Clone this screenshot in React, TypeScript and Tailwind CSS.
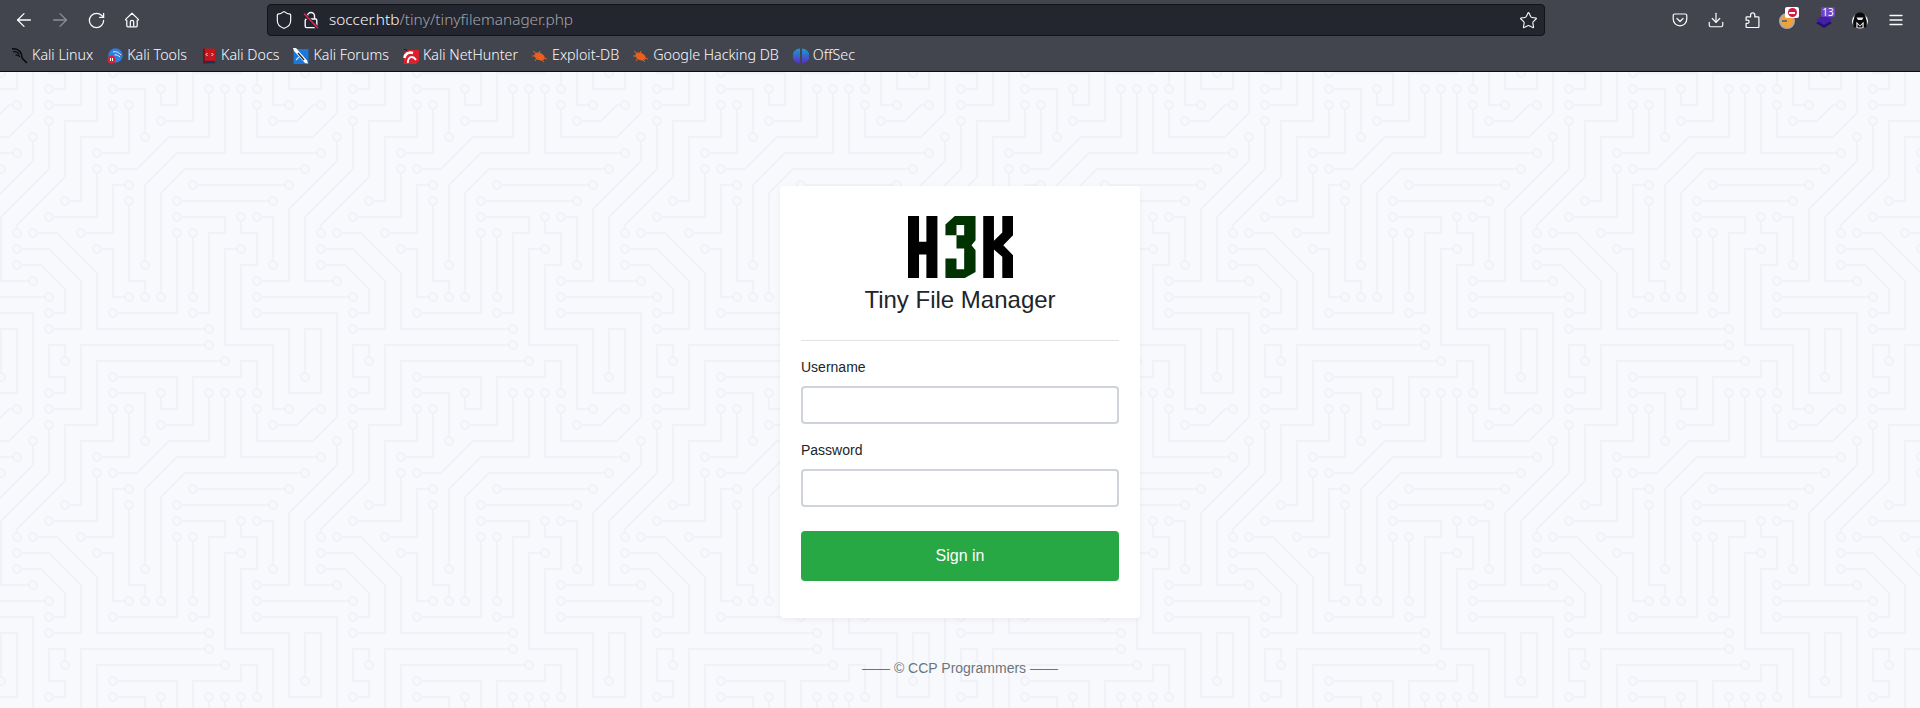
// App.tsx
import { ArrowLeft, ArrowRight, RotateCw, Download, Star, Shield } from "lucide-react";

// circuit traces of the page background, tile is 912 units = 304px
const traces = [
  "M339 921H531V1017H483V969",
  "M771 969V873H723V921H579V1065H483",
  "M195 873V825H147V921H195V969H147",
  "M627 825H243V1017H147",
  "M675 873H291V1065H195V1233L51 1377V1401",
  "M147 153V297L3 441V633H99",
  "M339 105V201H243V393H195",
  "M387 105V249H291",
  "M339 57H435V201",
  "M291 297V441H147",
  "M339 297H411L507 201H627V57",
  "M675 57V249H531L435 345V585",
  "M723 57V249H963",
  "M771 729H1011V1041L939 1113H771V1017",
  "M723 537H675V825H819V1017H867",
  "M963 105H939L891 153H819",
  "M1011 201V273L867 417V633H771",
  "M915 297H555L483 369V681",
  "M867 345H579",
  "M819 393H531",
  "M531 441H675V489H627V729H579",
  "M723 441V489H771V585H723V777H867V969H963V777H915V921",
  "M771 441H819V585",
  "M531 489V729H339",
  "M579 489V681",
  "M387 345H339V489H243",
  "M387 393V633H435V681",
  "M291 537H339V681H387",
  "M99 489H171L291 609V777H627",
  "M51 537H147L243 633V777H147",
  "M51 585H123L195 657V729H147",
  "M771 681H1059",
];

const nodes = [
  [339, 921], [483, 969], [771, 969], [483, 1065], [195, 873], [147, 969], [627, 825], [147, 1017],
  [675, 873], [51, 1401], [147, 153], [99, 633], [339, 105], [195, 393], [387, 105], [291, 249],
  [339, 57], [435, 201], [291, 297], [147, 441], [339, 297], [627, 57], [675, 57], [435, 585],
  [723, 57], [963, 249], [771, 729], [771, 1017], [723, 537], [867, 1017], [963, 105], [819, 153],
  [1011, 201], [771, 633], [915, 297], [483, 681], [867, 345], [579, 345], [819, 393], [531, 393],
  [531, 441], [579, 729], [723, 441], [915, 921], [771, 441], [819, 585], [531, 489], [339, 729],
  [579, 489], [579, 681], [387, 345], [243, 489], [387, 393], [435, 681], [291, 537], [387, 681],
  [99, 489], [627, 777], [51, 537], [147, 777], [51, 585], [147, 729], [771, 681], [1059, 681],
];

const offsets = [-912, 0, 912];

function CircuitBackground() {
  return (
    <svg className="absolute inset-0 h-full w-full" aria-hidden="true">
      <defs>
        <pattern id="circuit" width="304" height="304" patternUnits="userSpaceOnUse" patternTransform="translate(0 -2)">
          <g transform="scale(0.33333)" fill="none" stroke="#f0f2f8" strokeWidth="6">
            {offsets.map((dx) =>
              offsets.map((dy) => (
                <g key={`${dx}-${dy}`} transform={`translate(${dx} ${dy})`}>
                  {traces.map((d) => (
                    <path key={d} d={d} />
                  ))}
                  {nodes.map(([x, y]) => (
                    <circle key={`${x}-${y}`} cx={x} cy={y} r="12" fill="#f8f9fc" />
                  ))}
                </g>
              ))
            )}
          </g>
        </pattern>
      </defs>
      <rect width="100%" height="100%" fill="url(#circuit)" />
    </svg>
  );
}

function LockSlash() {
  return (
    <svg width="16" height="18" viewBox="0 0 16 18" fill="none">
      <path d="M4.5 8V5a3.5 3.5 0 0 1 7 0v3" stroke="#fbfbfe" strokeWidth="1.4" />
      <rect x="2.2" y="8" width="11.6" height="8.6" rx="1.4" stroke="#fbfbfe" strokeWidth="1.4" />
      <path d="M1 3l13.5 14" stroke="#23252f" strokeWidth="3.4" />
      <path d="M1 2.4l14 14.8" stroke="#e22850" strokeWidth="1.5" />
    </svg>
  );
}

function PocketIcon() {
  return (
    <svg width="16" height="16" viewBox="0 0 16 16" fill="none" stroke="#fbfbfe" strokeWidth="1.2">
      <path d="M2.6 2h10.800a1.400 1.400 0 0 1 1.400 1.400V7a6.800 6.800 0 0 1-13.600 0V3.400A1.400 1.400 0 0 1 2.600 2z" />
      <path d="M5 6.500l3 3 3-3" strokeLinecap="round" strokeLinejoin="round" />
    </svg>
  );
}

function PuzzleIcon() {
  return (
    <svg width="16" height="16" viewBox="0 0 16 16" fill="none" stroke="#fbfbfe" strokeWidth="1.25" strokeLinejoin="round">
      <path d="M6.600 3.200V3a2.100 2.100 0 0 1 4.200 0v1.800h3.400a.7.7 0 0 1 .7.7v9.300a.7.7 0 0 1-.7.7H2.800a.7.7 0 0 1-.7-.7v-3.400h1.400a1.600 1.600 0 0 0 0-3.200H2.100V5.500a.7.7 0 0 1 .7-.7h3.800z" />
    </svg>
  );
}

function HomeIcon() {
  return (
    <svg width="16" height="16" viewBox="0 0 16 16" fill="none" stroke="#fbfbfe" strokeWidth="1.25" strokeLinejoin="round">
      <path d="M1.600 7.400L8 1.200l6.400 6.200v.6l-1.200.4v5.400a1 1 0 0 1-1 1H3.800a1 1 0 0 1-1-1V8.400l-1.200-.4z" />
      <path d="M6.300 14.600V10a1.700 1.700 0 0 1 3.400 0v4.600" />
    </svg>
  );
}

function FoxyIcon() {
  return (
    <div className="relative h-4 w-4">
      <div className="absolute left-[-1px] top-[1px] h-[16px] w-[16px] rounded-full border-2 border-[#b9a896] bg-[#f0a138]" />
      <div className="absolute left-[2px] top-[8px] h-[2px] w-[5px] bg-[#6d6d6d]" />
      <div className="absolute left-[5px] top-[-5px] flex h-[11px] w-[14px] items-center justify-center rounded-[2px] bg-white">
        <div className="flex h-[9px] w-[9px] items-center justify-center rounded-full bg-[#d6163c]">
          <div className="h-[2px] w-[6px] bg-white" />
        </div>
      </div>
    </div>
  );
}

function LayersIcon() {
  return (
    <div className="relative h-4 w-4">
      <svg width="18" height="16" viewBox="0 0 18 16" className="absolute left-[-1px] top-[1px]">
        <path d="M9 5l8 5-8 5-8-5z" fill="#24106e" />
        <path d="M9 2l8 5-8 5-8-5z" fill="#4420a8" />
      </svg>
      <div className="absolute left-[5px] top-[-5px] h-[10px] w-[14px] rounded-[2px] bg-[#6e44c9] text-center text-[10px] leading-[10px] text-white">13</div>
    </div>
  );
}

function HackerIcon() {
  return (
    <svg width="16" height="17" viewBox="0 0 16 17">
      <ellipse cx="8" cy="9" rx="8" ry="7.500" fill="#fff" />
      <path d="M8 0.500C4.500 0.500 2.500 3 2 6.500 0.800 9 0.800 13 2 15.500h2.400V9.800L8 13.500l3.600-3.700v5.700H14c1.200-2.500 1.200-6.500 0-9C13.500 3 11.500 0.500 8 0.500z" fill="#0a0a0a" />
      <path d="M4.500 5.500h7L10 8H6z" fill="#e8e8e8" />
      <path d="M5.500 15.500V12L8 14.500 10.500 12v3.500z" fill="#0a0a0a" />
    </svg>
  );
}

function MenuIcon() {
  return (
    <svg width="16" height="16" viewBox="0 0 16 16" stroke="#fbfbfe" strokeWidth="1.3" strokeLinecap="round">
      <path d="M2 3.500h12M2 8h12M2 12.500h12" />
    </svg>
  );
}

function KaliIcon() {
  return (
    <svg width="16" height="16" viewBox="0 0 16 16" fill="none" stroke="#08080a" strokeWidth="1.500">
      <path d="M0 1c3-.5 6 .5 8 2.500 1.800 1.800 1.800 3.500 1.800 5 0 2.500 2.700 3.500 5 6.500" />
      <path d="M1 4c2.500-.8 4.800.3 6.400 2.200M3.500 7c1.800-.3 3.500.5 4.500 2" strokeWidth="1.200" />
    </svg>
  );
}

function ToolsIcon() {
  return (
    <svg width="16" height="16" viewBox="0 0 16 16" fill="none">
      <circle cx="8.500" cy="7.500" r="7.200" fill="#2f7fe0" />
      <path d="M6 4c3-1 6 .5 8 3M7.500 7c2-.5 4 .5 5.500 2" stroke="#e6f0fb" strokeWidth="1" />
      <circle cx="4.500" cy="11.500" r="4" fill="#d92232" />
      <rect x="3" y="10" width="1" height="3" fill="#fff" />
      <rect x="5" y="10" width="1" height="3" fill="#fff" />
    </svg>
  );
}

function DocsIcon() {
  return (
    <svg width="16" height="16" viewBox="0 0 16 16">
      <rect x="2" y="0.500" width="12" height="15" rx="1" fill="#c4161c" />
      <rect x="2" y="12.800" width="12" height="2.700" fill="#20304f" />
      <rect x="2" y="0.500" width="2" height="15" fill="#7c1015" />
      <path d="M6.500 5l-1.500 1.500 1.500 1.500M10.500 5l1.500 1.500-1.500 1.500" stroke="#fff" fill="none" strokeWidth="0.9" />
    </svg>
  );
}

function ForumsIcon() {
  return (
    <svg width="16" height="16" viewBox="0 0 16 16">
      <rect x="0.500" y="1" width="15" height="15" fill="#1b77d8" />
      <path d="M0 0l3 0 11 12.500 1 3-3-.5L1 3z" fill="#fff" />
      <path d="M5 5l6 7" stroke="#272727" strokeWidth="1.300" />
      <path d="M3 12l3-3" stroke="#cfe4fa" strokeWidth="1.200" />
    </svg>
  );
}

function NetHunterIcon() {
  return (
    <svg width="16" height="16" viewBox="0 0 16 16" fill="none">
      <path d="M4 2h12v11l-3 3H1V5z" fill="#d8232f" />
      <path d="M1.500 10C2 6 5.500 3.500 10 5" stroke="#fff" strokeWidth="2.600" />
      <path d="M5 15c-.5-3 1-6 4-6 2 0 3 1.500 4 3" stroke="#fff" strokeWidth="1.800" />
      <path d="M1 1.500c1.500 0 3 .5 4 2" stroke="#1a1a1a" strokeWidth="1" />
    </svg>
  );
}

function BugIcon() {
  return (
    <svg width="16" height="16" viewBox="0 0 16 16" fill="#e8601c">
      <ellipse cx="7.500" cy="8.500" rx="5.500" ry="3.600" transform="rotate(25 7.500 8.500)" />
      <path d="M1 3l4 3M8 3l-1 3M15 11l-4-1M12 14l-3-3M3 13l2-3M0 8h3" stroke="#e8601c" strokeWidth="1" fill="none" />
    </svg>
  );
}

function OffSecIcon() {
  return (
    <svg width="16" height="16" viewBox="0 0 16 16">
      <defs>
        <linearGradient id="offsec" x1="0" y1="0" x2="0" y2="1">
          <stop offset="0" stopColor="#1a9bd2" />
          <stop offset="1" stopColor="#5b2cc4" />
        </linearGradient>
      </defs>
      <path d="M7 0.500v15A7.500 7.500 0 0 1 7 .5z" fill="url(#offsec)" />
      <path d="M9 0.500v15A7.500 7.500 0 0 0 9 .5z" fill="url(#offsec)" />
    </svg>
  );
}

function Logo() {
  return (
    <svg width="105" height="62" viewBox="55 33 314 185">
      <path d="M55 33h33v77h22V33h33v185h-33v-70H88v70H55z" fill="#000" />
      <path
        fillRule="evenodd"
        d="M195 33h62v72l-12 15 12 15v65l-32 18h-58v-58h33v32h23v-62h-23V90h-33V58zM200 60v30h23V60z"
        fill="#013301"
      />
      <path d="M280 33h32v74l25-25V33h32v57l-29 30 29 30v68h-32v-63l-25-22v85h-32z" fill="#000" />
    </svg>
  );
}

const bookmarks = [
  { label: "Kali Linux", icon: <KaliIcon /> },
  { label: "Kali Tools", icon: <ToolsIcon /> },
  { label: "Kali Docs", icon: <DocsIcon /> },
  { label: "Kali Forums", icon: <ForumsIcon /> },
  { label: "Kali NetHunter", icon: <NetHunterIcon /> },
  { label: "Exploit-DB", icon: <BugIcon /> },
  { label: "Google Hacking DB", icon: <BugIcon /> },
  { label: "OffSec", icon: <OffSecIcon /> },
];

function ToolButton({ children }: { children: React.ReactNode }) {
  return <div className="flex h-8 w-9 items-center justify-center">{children}</div>;
}

function BrowserChrome() {
  return (
    <header className="h-[72px] border-b border-[#0c0c0d] bg-[#42454e] font-['Noto_Sans',sans-serif] text-[#fbfbfe]">
      <div className="flex h-10 items-center pl-[6px] pr-[6px]">
        <ToolButton><ArrowLeft size={22} strokeWidth={1.4} /></ToolButton>
        <ToolButton><ArrowRight size={22} strokeWidth={1.4} className="opacity-40" /></ToolButton>
        <ToolButton><RotateCw size={19} strokeWidth={1.6} /></ToolButton>
        <ToolButton><HomeIcon /></ToolButton>
        <div className="ml-[117px] flex h-8 w-[1278px] items-center rounded-[4px] border border-[#121317] bg-[#23252f] pl-[6px] pr-[6px]">
          <Shield size={20} strokeWidth={1.4} />
          <div className="ml-[9px]"><LockSlash /></div>
          <div className="ml-[10px] text-[15.4px] font-light leading-none">
            soccer.htb<span className="text-[#a3a4aa]">/tiny/tinyfilemanager.php</span>
          </div>
          <Star size={19} strokeWidth={1.4} className="ml-auto" />
        </div>
        <div className="ml-[117px] flex items-center">
          <ToolButton><PocketIcon /></ToolButton>
          <ToolButton><Download size={18} strokeWidth={1.6} /></ToolButton>
          <ToolButton><PuzzleIcon /></ToolButton>
          <ToolButton><FoxyIcon /></ToolButton>
          <ToolButton><LayersIcon /></ToolButton>
          <ToolButton><HackerIcon /></ToolButton>
          <ToolButton><MenuIcon /></ToolButton>
        </div>
      </div>
      <div className="flex h-[31px] items-center gap-[14px] pl-[12px]">
        {bookmarks.map((b) => (
          <div key={b.label} className="flex items-center gap-[4px] text-[14.25px] font-light leading-none">
            {b.icon}
            <span>{b.label}</span>
          </div>
        ))}
      </div>
    </header>
  );
}

export default function App() {
  return (
    <div className="h-[708px] overflow-hidden bg-[#f8f9fc]">
      <BrowserChrome />
      <main className="relative flex h-[636px] flex-col items-center pt-[114px] font-['Liberation_Sans',sans-serif]">
        <CircuitBackground />
        <form className="relative w-[360px] rounded-[4px] bg-white px-[21px] pb-[37px] pt-[30px] shadow-[0_2px_6px_rgba(0,0,0,0.05)]">
          <div className="flex justify-center">
            <Logo />
          </div>
          <h1 className="mt-[7px] text-center text-[24px] leading-[29px] text-[#212529]">Tiny File Manager</h1>
          <hr className="mt-[26px] border-[#e0e2e6]" />
          <label className="mt-[16px] block text-[14px] leading-[21px] text-[#212529]">Username</label>
          <input type="text" className="mt-[8px] block h-[38px] w-full rounded-[4px] border-2 border-[#ced4da] bg-white" />
          <label className="mt-[16px] block text-[14px] leading-[21px] text-[#212529]">Password</label>
          <input type="password" className="mt-[8px] block h-[38px] w-full rounded-[4px] border-2 border-[#ced4da] bg-white" />
          <button type="button" className="mt-[24px] block h-[50px] w-full rounded-[4px] bg-[#28a745] text-[16px] text-white">
            Sign in
          </button>
        </form>
        <footer className="relative mt-[40px] text-[14px] leading-[21px] text-[#6c757d]">—— © CCP Programmers ——</footer>
      </main>
    </div>
  );
}
